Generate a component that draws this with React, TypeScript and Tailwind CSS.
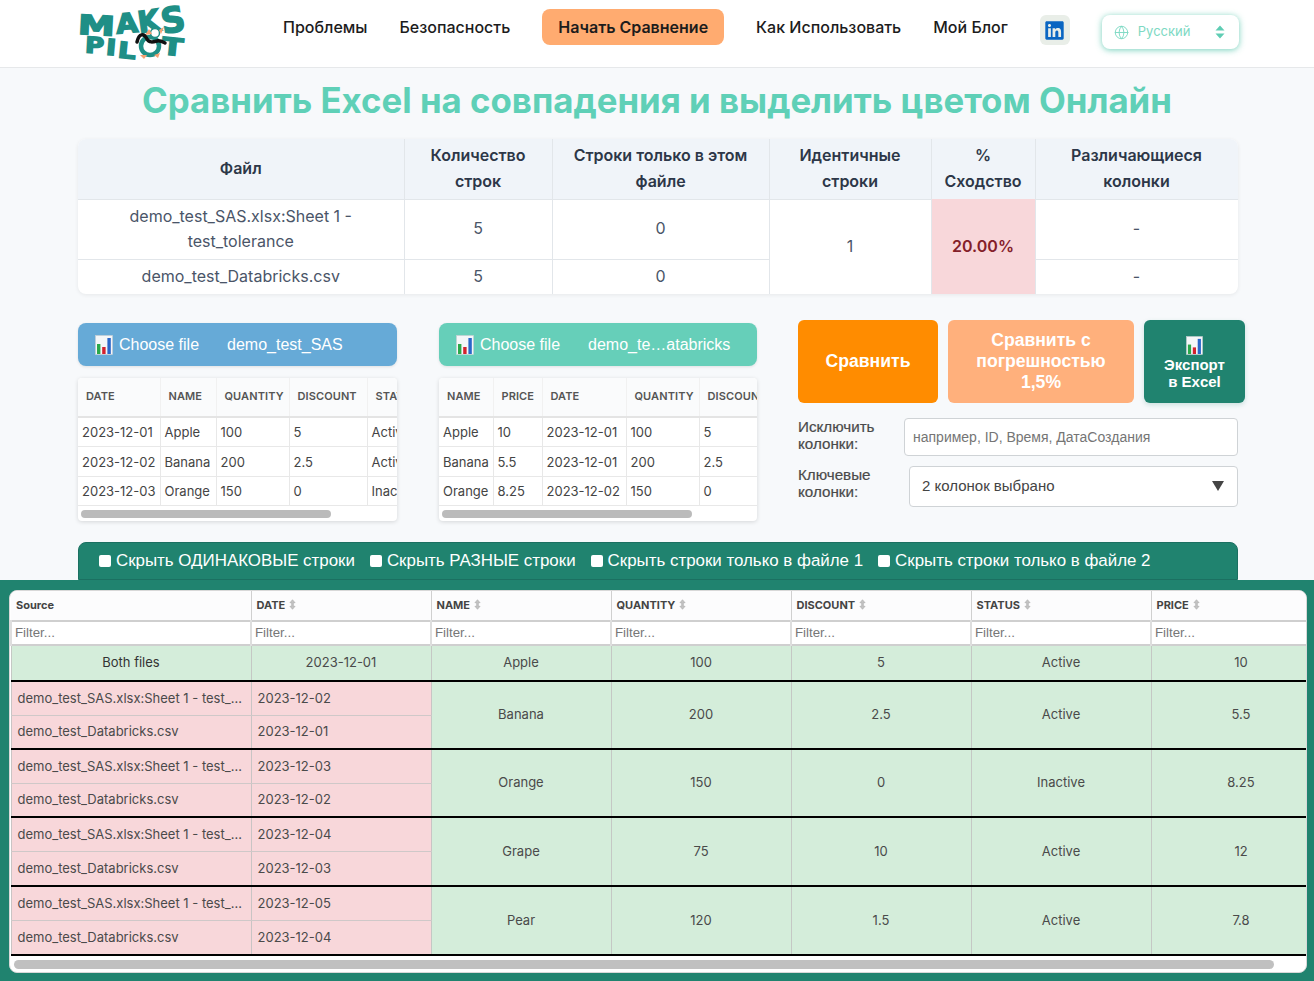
import { Globe } from "lucide-react";
import { FaLinkedin } from "react-icons/fa";

function ChartIcon({ className }: { className?: string }) {
  return (
    <svg viewBox="0 0 18 20" className={className}>
      <rect x="0.5" y="0.5" width="17" height="19" fill="#f4f6f8" stroke="#c9ced3" strokeWidth="0.6" />
      <rect x="2" y="9" width="3.4" height="10" fill="#2aa84a" />
      <rect x="7.2" y="12" width="3.4" height="7" fill="#d3212d" />
      <rect x="12.4" y="3" width="3.4" height="16" fill="#2a66c9" />
    </svg>
  );
}

function SortIcon() {
  return (
    <svg viewBox="0 0 8 12" className="ml-1 inline-block h-[11px] w-[7px] align-[-1px]">
      <path d="M4 0.5 L7 4 H5 V8 H7 L4 11.5 L1 8 H3 V4 H1 Z" fill="#c4c4c4" stroke="#999" strokeWidth="0.5" />
    </svg>
  );
}

function Logo() {
  const font = { fontFamily: "'DejaVu Sans', sans-serif", fontWeight: 700, fill: "#1f8f86", stroke: "#1f8f86", strokeWidth: 1.5 };
  return (
    <svg viewBox="0 0 108 56" className="h-[56px] w-[108px] shrink-0">
      <text x="0" y="30" fontSize="27" style={font} textLength="37" lengthAdjust="spacingAndGlyphs" transform="rotate(3 20 20)">M</text>
      <text x="38" y="28" fontSize="27" style={font} textLength="22" lengthAdjust="spacingAndGlyphs" transform="rotate(-5 48 20)">A</text>
      <text x="60" y="27" fontSize="30" style={font} textLength="22" lengthAdjust="spacingAndGlyphs" transform="rotate(-8 70 18)">K</text>
      <text x="83" y="27" fontSize="35" style={font} textLength="24" lengthAdjust="spacingAndGlyphs" transform="rotate(-10 95 15)">S</text>
      <text x="7" y="48" fontSize="22" style={font} textLength="19" lengthAdjust="spacingAndGlyphs" transform="rotate(3 16 42)">P</text>
      <text x="28" y="50" fontSize="22" style={font} textLength="10" lengthAdjust="spacingAndGlyphs" transform="rotate(5 33 44)">I</text>
      <text x="40" y="53" fontSize="22" style={font} textLength="18" lengthAdjust="spacingAndGlyphs" transform="rotate(6 48 46)">L</text>
      <text x="84" y="50" fontSize="24" style={font} textLength="21" lengthAdjust="spacingAndGlyphs" transform="rotate(6 94 42)">T</text>
      <circle cx="72" cy="41" r="9" fill="#fff" stroke="#1f8f86" strokeWidth="4.5" />
      <circle cx="77" cy="28" r="4.5" fill="#fff" stroke="#1f8f86" strokeWidth="1.5" />
      <path d="M71 24 L67 30 L74 29 Z" fill="#f6a173" />
      <path d="M81 25 L86 22 L83 29 Z" fill="#f6a173" />
      <path d="M59 37 C61 28 66 28 69 34 C71 38 75 37 79 36 C82 35 85 37 87 38" fill="none" stroke="#111" strokeWidth="3.5" strokeLinecap="round" />
      <path d="M62 50 L66 54 L69 50 Z M76 50 L80 53 L82 48 Z" fill="#f6a173" />
    </svg>
  );
}

function Cb({ label }: { label: string }) {
  return (
    <label className="flex items-center gap-[5px]">
      <span className="h-[12px] w-[12px] rounded-[2px] bg-white" />
      <span>{label}</span>
    </label>
  );
}

type Col = { name: string; w: number };

function Preview({ cols, rows, width }: { cols: Col[]; rows: string[][]; width: string }) {
  const total = cols.reduce((a, c) => a + c.w, 0);
  return (
    <div className={`relative mt-[12px] h-[143px] overflow-hidden rounded-[4px] bg-white shadow-[0_1px_4px_rgba(0,0,0,0.14)] ${width}`}>
      <table className="table-fixed border-collapse text-[13px] text-[#444]" style={{ width: total }}>
        <colgroup>
          {cols.map((c) => (
            <col key={c.name} style={{ width: c.w }} />
          ))}
        </colgroup>
        <thead>
          <tr className="h-[39px] border-b-2 border-[#e4e4e4] bg-[#fafbfc]">
            {cols.map((c) => (
              <th key={c.name} className="overflow-hidden whitespace-nowrap border-r border-[#f1f1f1] px-[8px] pb-[2px] text-left text-[11px] font-semibold uppercase tracking-[0.1px] text-[#555]">
                {c.name}
              </th>
            ))}
          </tr>
        </thead>
        <tbody>
          {rows.map((r, i) => (
            <tr key={i} className="h-[29.5px] border-b border-[#e8e8e8]">
              {r.map((v, j) => (
                <td key={j} className="overflow-hidden whitespace-nowrap border-r border-[#e8e8e8] px-[4px] pt-[2px]">
                  {v}
                </td>
              ))}
            </tr>
          ))}
        </tbody>
      </table>
      <div className="absolute bottom-[3px] left-[3px] h-[8px] w-[250px] rounded-full bg-[#bbbbbb]" />
    </div>
  );
}

const sh = "border-r border-[#e2e6ea] px-2 pb-[2px] font-semibold text-[#2d3748] leading-[26px]";
const sb = "border-r border-[#e2e6ea] border-t border-t-[#e2e6ea] px-2 text-center text-[#4a5568]";
const sd = `${sb} pb-[2px]`;

function Summary() {
  return (
    <div className="ml-[78px] h-[155px] w-[1160px] overflow-hidden rounded-[8px] bg-white shadow-[0_1px_4px_rgba(0,0,0,0.07)]">
      <table className="w-[1160px] table-fixed border-collapse text-[16px]">
        <colgroup>
          <col className="w-[326px]" />
          <col className="w-[148px]" />
          <col className="w-[217px]" />
          <col className="w-[162px]" />
          <col className="w-[104px]" />
          <col className="w-[203px]" />
        </colgroup>
        <thead>
          <tr className="h-[60px] bg-[#f0f4f9]">
            <th className={sh}>Файл</th>
            <th className={sh}>Количество строк</th>
            <th className={sh}>Строки только в этом файле</th>
            <th className={sh}>Идентичные строки</th>
            <th className={sh}>% Сходство</th>
            <th className={sh}>Различающиеся колонки</th>
          </tr>
        </thead>
        <tbody>
          <tr className="h-[60px]">
            <td className={`${sb} leading-[25px]`}>demo_test_SAS.xlsx:Sheet 1 - test_tolerance</td>
            <td className={sd}>5</td>
            <td className={sd}>0</td>
            <td rowSpan={2} className={sd}>1</td>
            <td rowSpan={2} className="border-r border-[#e2e6ea] bg-[#f8d7da] pb-[2px] text-center font-semibold text-[#842029]">20.00%</td>
            <td className={sd}>-</td>
          </tr>
          <tr className="h-[35px]">
            <td className={sd}>demo_test_Databricks.csv</td>
            <td className={sd}>5</td>
            <td className={sd}>0</td>
            <td className={sd}>-</td>
          </tr>
        </tbody>
      </table>
    </div>
  );
}

function FileBtn({ name, bg, width }: { name: string; bg: string; width: string }) {
  return (
    <div className={`flex h-[43px] items-center rounded-[8px] pl-[17px] font-['Liberation_Sans',Arial,sans-serif] text-[16px] text-white shadow-[0_1px_3px_rgba(0,0,0,0.1)] ${bg} ${width}`}>
      <ChartIcon className="h-[20px] w-[18px]" />
      <span className="ml-[6px]">Choose file</span>
      <span className="ml-[28px]">{name}</span>
    </div>
  );
}

const mainCols = [240, 180, 180, 180, 180, 180, 180];
const heads = ["DATE", "NAME", "QUANTITY", "DISCOUNT", "STATUS", "PRICE"];
const SRC = "demo_test_SAS.xlsx:Sheet 1 - test_tolerance";
const SRC2 = "demo_test_Databricks.csv";
const groups = [
  { d1: "2023-12-02", d2: "2023-12-01", v: ["Banana", "200", "2.5", "Active", "5.5"], h: "h-[34px]" },
  { d1: "2023-12-03", d2: "2023-12-02", v: ["Orange", "150", "0", "Inactive", "8.25"], h: "h-[34px]" },
  { d1: "2023-12-04", d2: "2023-12-03", v: ["Grape", "75", "10", "Active", "12"], h: "h-[34.5px]" },
  { d1: "2023-12-05", d2: "2023-12-04", v: ["Pear", "120", "1.5", "Active", "7.8"], h: "h-[34.5px]" },
];
const gc = "bg-[#d4edda] text-center border-x border-[#c4c8c4] border-b-2 border-b-black";
const rc = "bg-[#f8d7da] border-x border-[#c9c4c4] truncate";

function MainTable() {
  return (
    <div className="relative h-[383px] overflow-hidden rounded-[8px] border border-[#d8d8d8] bg-white">
      <table className="w-[1320px] table-fixed border-collapse text-[13px] text-[#4a4a4a]">
        <colgroup>
          {mainCols.map((w, i) => (
            <col key={i} style={{ width: w }} />
          ))}
        </colgroup>
        <thead>
          <tr className="h-[30px] bg-[#fcfcfd] text-left text-[11px] font-bold text-[#444]">
            <th className="border-r border-[#d0d0d0] pl-[5px] font-bold">Source</th>
            {heads.map((h) => (
              <th key={h} className="border-r border-[#d0d0d0] pl-[5px] font-bold">
                {h}
                <SortIcon />
              </th>
            ))}
          </tr>
          <tr className="h-[24px] border-y-2 border-[#cfcfcf] bg-white">
            {mainCols.map((_, i) => (
              <th key={i} className="border-x-2 border-[#dedede] pl-[3px] text-left font-['Liberation_Sans',Arial,sans-serif] text-[13.3px] font-normal text-[#777]">
                Filter...
              </th>
            ))}
          </tr>
        </thead>
        <tbody>
          <tr className="h-[36px]">
            <td className={`${gc} text-[#333]`}>Both files</td>
            <td className={gc}>2023-12-01</td>
            <td className={gc}>Apple</td>
            <td className={gc}>100</td>
            <td className={gc}>5</td>
            <td className={gc}>Active</td>
            <td className={gc}>10</td>
          </tr>
          {groups.map((g) => [
            <tr key={g.d1} className={g.h}>
              <td className={`${rc} border-b border-b-[#cfc8c8] px-[6px]`}>{SRC}</td>
              <td className={`${rc} border-b border-b-[#cfc8c8] px-[6px]`}>{g.d1}</td>
              {g.v.map((v) => (
                <td key={v} rowSpan={2} className={gc}>
                  {v}
                </td>
              ))}
            </tr>,
            <tr key={g.d2 + "b"} className={g.h}>
              <td className={`${rc} border-b-2 border-b-black px-[6px]`}>{SRC2}</td>
              <td className={`${rc} border-b-2 border-b-black px-[6px]`}>{g.d2}</td>
            </tr>,
          ])}
        </tbody>
      </table>
      <div className="absolute bottom-[3px] left-[4px] h-[9px] w-[1260px] rounded-full bg-[#c0c0c0]" />
    </div>
  );
}

export default function App() {
  return (
    <div className="min-h-[981px] w-[1314px] overflow-hidden bg-[#f7f9fb] font-['Inter',sans-serif]">
      <header className="flex h-[68px] items-start border-b border-[#e6e8ea] bg-white pl-[78px]">
        <div className="mt-[5px]">
          <Logo />
        </div>
        <nav className="ml-[97px] mt-[9px] flex items-start gap-[32px] text-[16px] font-medium text-[#1c1c1c]">
          <span className="leading-[36px]">Проблемы</span>
          <span className="leading-[36px]">Безопасность</span>
          <span className="h-[36px] rounded-[8px] bg-[#ffab70] px-[16px] font-semibold leading-[36px]">Начать Сравнение</span>
          <span className="leading-[36px]">Как Использовать</span>
          <span className="leading-[36px]">Мой Блог</span>
          <span className="mt-[6px] flex h-[30px] w-[30px] items-center justify-center rounded-[6px] bg-[#e9eee8]">
            <FaLinkedin className="h-[21px] w-[21px] text-[#0a66c2]" />
          </span>
        </nav>
        <div className="ml-[32px] mt-[15px] flex h-[34px] w-[137px] items-center rounded-[8px] bg-white pl-[12px] pr-[14px] text-[13px] text-[#7dd9c3] shadow-[0_1px_6px_rgba(60,190,160,0.7)]">
          <Globe className="h-[15px] w-[15px] stroke-[1.5]" />
          <span className="ml-[9px]">Русский</span>
          <svg viewBox="0 0 10 14" className="ml-auto h-[14px] w-[10px]">
            <path d="M5 0.5 L9.5 5.5 H0.5 Z M5 13.5 L0.5 8.5 H9.5 Z" fill="#5fcdb4" />
          </svg>
        </div>
      </header>

      <h1 className="flex h-[71px] items-center justify-center pb-[7px] text-[34.8px] font-bold text-[#5fd0b7]">
        Сравнить Excel на совпадения и выделить цветом Онлайн
      </h1>

      <Summary />

      <div className="mt-[26px] flex h-[222px] items-start pl-[78px]">
        <div className="mt-[3px] w-[319px]">
          <FileBtn name="demo_test_SAS" bg="bg-[#66aad7]" width="w-[319px]" />
          <Preview
            width="w-[319px]"
            cols={[
              { name: "Date", w: 82 },
              { name: "Name", w: 56 },
              { name: "Quantity", w: 73 },
              { name: "Discount", w: 78 },
              { name: "Status", w: 70 },
            ]}
            rows={[
              ["2023-12-01", "Apple", "100", "5", "Active"],
              ["2023-12-02", "Banana", "200", "2.5", "Active"],
              ["2023-12-03", "Orange", "150", "0", "Inactive"],
            ]}
          />
        </div>
        <div className="ml-[42px] mt-[3px] w-[318px]">
          <FileBtn name="demo_te…atabricks" bg="bg-[#66cfb9]" width="w-[318px]" />
          <Preview
            width="w-[318px]"
            cols={[
              { name: "Name", w: 54 },
              { name: "Price", w: 49 },
              { name: "Date", w: 84 },
              { name: "Quantity", w: 73 },
              { name: "Discount", w: 80 },
            ]}
            rows={[
              ["Apple", "10", "2023-12-01", "100", "5"],
              ["Banana", "5.5", "2023-12-01", "200", "2.5"],
              ["Orange", "8.25", "2023-12-02", "150", "0"],
            ]}
          />
        </div>
        <div className="ml-[41px] w-[447px] font-['Liberation_Sans',Arial,sans-serif]">
          <div className="flex h-[83px] gap-[10px] text-center font-bold text-white">
            <button className="w-[140px] rounded-[6px] bg-[#ff8c00] text-[17.6px]">Сравнить</button>
            <button className="w-[186px] rounded-[6px] bg-[#ffb07c] px-3 text-[17.6px] leading-[21px]">
              Сравнить с погрешностью 1,5%
            </button>
            <button className="flex w-[101px] flex-col items-center justify-center rounded-[6px] bg-[#20836f] pt-[2px] text-[15px] leading-[17px] shadow-[0_2px_5px_rgba(32,131,111,0.2)]">
              <ChartIcon className="mb-[1px] h-[19px] w-[17px]" />
              <span>Экспорт</span>
              <span>в Excel</span>
            </button>
          </div>
          <div className="mt-[15px] flex h-[38px] items-center text-[15.2px] font-medium leading-[17px] text-[#4a4a4a]">
            <span className="mb-[4px] w-[106px] [-webkit-text-stroke:0.2px_#4a4a4a]">Исключить колонки:</span>
            <div className="flex h-[38px] w-[334px] items-center rounded-[4px] border border-[#cfd3d6] bg-white pl-[8px] text-[14px] text-[#757575] [-webkit-text-stroke:0]">
              например, ID, Время, ДатаСоздания
            </div>
          </div>
          <div className="mt-[10px] flex h-[41px] items-center text-[15.2px] font-medium leading-[17px] text-[#4a4a4a]">
            <span className="mb-[8px] w-[111px] [-webkit-text-stroke:0.2px_#4a4a4a]">Ключевые колонки:</span>
            <div className="flex h-[41px] w-[329px] items-center justify-between rounded-[4px] border border-[#cfd3d6] bg-white pb-[2px] pl-[12px] pr-[13px] text-[15px] text-[#444] [-webkit-text-stroke:0]">
              <span>2 колонок выбрано</span>
              <svg viewBox="0 0 12 10" className="h-[10px] w-[12px]">
                <path d="M0 0 H12 L6 10 Z" fill="#444" />
              </svg>
            </div>
          </div>
        </div>
      </div>

      <div className="ml-[78px] flex h-[38px] w-[1160px] items-center gap-[15px] rounded-t-[8px] border border-[#1b7061] bg-[#20836f] pl-[20px] font-['Liberation_Sans',Arial,sans-serif] text-[16.9px] text-white">
        <Cb label="Скрыть ОДИНАКОВЫЕ строки" />
        <Cb label="Скрыть РАЗНЫЕ строки" />
        <Cb label="Скрыть строки только в файле 1" />
        <Cb label="Скрыть строки только в файле 2" />
      </div>

      <section className="h-[401px] bg-[#20836f] pb-[8px] pl-[9px] pr-[7px] pt-[10px]">
        <MainTable />
      </section>
    </div>
  );
}
